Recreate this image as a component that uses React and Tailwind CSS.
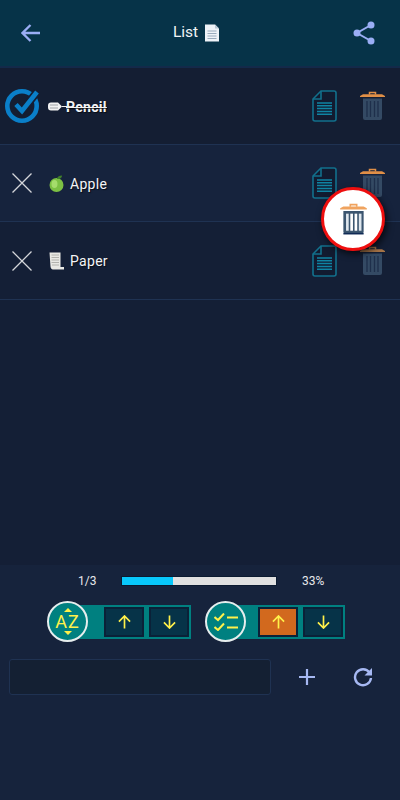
const FONT = { fontFamily: 'Roboto, "Liberation Sans", sans-serif' };

function DocIcon() {
  return (
    <svg width="25" height="32" viewBox="0 0 25 32" fill="none" className="block">
      <path d="M9 1H22a2 2 0 0 1 2 2V29a2 2 0 0 1-2 2H3a2 2 0 0 1-2-2V9Z" fill="#121b30" stroke="#12708c" strokeWidth="1.600" />
      <path d="M9 1V9H1" stroke="#12708c" strokeWidth="1.600" />
      <path d="M5 13H20M5 15.800H20M5 18.600H20M5 21.400H20M5 24.200H20" stroke="#0f84a3" strokeWidth="1.500" />
    </svg>
  );
}

function TrashIcon({ big, dim }) {
  const body = big ? "#3b556f" : "#344a64";
  const lid = big ? "#f0a35e" : dim ? "#a87548" : "#e08f47";
  return (
    <svg width={big ? 27 : 25} height={big ? 32 : 30} viewBox="0 0 25 30" className="block">
      <path d="M9.500 3.500V1.500H15.500V3.500" fill="none" stroke={lid} strokeWidth="1.500" />
      <path d="M0 5L3 3.200H22L25 5V6H0Z" fill={lid} />
      <path d="M3 7.500H22V27a2 2 0 0 1-2 2H5a2 2 0 0 1-2-2Z" fill={body} />
      {big ? (
        <>
          <path d="M5.500 10H8V26H5.500Z" fill="#dfe7ee" />
          <path d="M9.500 10H12V26H9.500Z" fill="#ffffff" />
          <path d="M13.500 10H16V26H13.500Z" fill="#ffffff" />
          <path d="M17.500 10H20V26H17.500Z" fill="#dfe7ee" />
          <path d="M3 28H22V29.500H3Z" fill="#102a55" />
        </>
      ) : (
        <path d="M7 10V26M10.500 10V26M14.500 10V26M18 10V26" stroke="#1e2f4b" strokeWidth="1.300" />
      )}
    </svg>
  );
}

function CrossIcon() {
  return (
    <svg width="20" height="20" viewBox="0 0 20 20" className="block">
      <path d="M0.500 0.500L19.500 19.500M19.500 0.500L0.500 19.500" stroke="#d4d6da" strokeWidth="1.300" />
    </svg>
  );
}

function CheckCircle() {
  return (
    <svg width="34" height="34" viewBox="0 0 34 34" className="block">
      <circle cx="17" cy="17" r="14.700" fill="none" stroke="#0a7fc9" strokeWidth="4.600" />
      <path d="M11 15.500L17 22L32 3" fill="none" stroke="#141e33" strokeWidth="8" />
      <path d="M11 15.500L17 22L32 3" fill="none" stroke="#0a7fc9" strokeWidth="4.600" />
    </svg>
  );
}

function PencilGlyph() {
  return (
    <svg width="14" height="9" viewBox="0 0 14 9" className="block overflow-visible">
      <path d="M3 0.500H10L14 4.500L10 8.500H3a3 3 0 0 1-3-3V3.500a3 3 0 0 1 3-3Z" fill="#f1f1f1" />
      <path d="M2 3H10M2 6H10" stroke="#8b8f96" strokeWidth="0.800" />
      <path d="M14 4.500H19" stroke="#f1f1f1" strokeWidth="1" />
    </svg>
  );
}

function AppleGlyph() {
  return (
    <svg width="15" height="17" viewBox="0 0 15 17" className="block">
      <ellipse cx="7.500" cy="10" rx="7" ry="7" fill="#7cc043" />
      <ellipse cx="5.500" cy="9" rx="3" ry="4" fill="#a5dc6c" />
      <path d="M8 4C8 2 10 0.500 13 0.500C13 3 11 4.500 8 4Z" fill="#3f7f2a" />
    </svg>
  );
}

function ScrollGlyph() {
  return (
    <svg width="15" height="18" viewBox="0 0 15 18" className="block">
      <path d="M0.500 0.500H11.500V15H15V17.500H4C2.500 17.500 1.500 16 1.500 14.500Z" fill="#e9e9e4" />
      <path d="M2.500 3H10M2.500 5.500H10M2.500 8H10M2.500 10.500H10M3 13H10" stroke="#a3a39e" strokeWidth="0.800" />
    </svg>
  );
}

function PageGlyph() {
  return (
    <svg width="16" height="18" viewBox="0 0 16 18" className="block">
      <path d="M1 0.500H11L15 4.500V17.500H1Z" fill="#eef3f8" />
      <path d="M11 0.500V4.500H15Z" fill="#b9c7d4" />
      <path d="M3.500 7H12.500M3.500 9.500H12.500M3.500 12H12.500M3.500 14.500H12.500" stroke="#8fa3b5" strokeWidth="0.900" />
    </svg>
  );
}

function Row({ h, bg, icon, glyph, label, strike, dimTrash }) {
  return (
    <div className={`flex items-center border-b border-[#1f3252] pl-[5px] pr-[15px] ${h} ${bg}`}>
      <div className="flex w-[34px] shrink-0 justify-center">{icon}</div>
      <div className={`ml-[9px] flex min-w-0 flex-1 items-center ${strike ? "gap-[4px]" : "gap-[6px]"}`}>
        <div className={`flex justify-center ${strike ? "w-[14px]" : "w-[16px]"}`}>{glyph}</div>
        <span
          className={`pt-[2px] text-[14px] tracking-[0.3px] text-[#f3f4f6] [text-shadow:1px_1px_1px_rgba(0,0,0,0.6)] ${
            strike ? "font-bold line-through" : "font-normal"
          }`}
        >
          {label}
        </span>
      </div>
      <div className="mr-[23px]">
        <DocIcon />
      </div>
      <TrashIcon dim={dimTrash} />
    </div>
  );
}

function Arrow({ down, active }) {
  return (
    <div
      className={`flex h-[30px] w-[40px] items-center justify-center border-2 border-[#0b2138] ${
        active ? "bg-[#d2691e]" : "bg-[#063348]"
      }`}
    >
      <svg width="13" height="14" viewBox="0 0 14 15" className="block">
        {down ? (
          <path d="M7 0.500V14M1 8L7 14L13 8" fill="none" stroke="#fff14a" strokeWidth="1.800" />
        ) : (
          <path d="M7 14.500V1M1 7L7 1L13 7" fill="none" stroke="#fff14a" strokeWidth="1.800" />
        )}
      </svg>
    </div>
  );
}

function SortGroup({ children, active, pad }) {
  return (
    <div className="flex items-center">
      <div className="z-10 flex h-[41px] w-[41px] shrink-0 items-center justify-center rounded-full border-2 border-[#e6eeee] bg-[#008080]">
        {children}
      </div>
      <div className={`ml-[-10px] flex h-[34px] items-center gap-[5px] bg-[#008080] pr-[2px] ${pad}`}>
        <Arrow active={active} />
        <Arrow down />
      </div>
    </div>
  );
}

export default function App() {
  return (
    <div className="relative flex h-[800px] w-[400px] flex-col overflow-hidden bg-[#141f36]" style={FONT}>
      <header className="flex h-[68px] shrink-0 items-center justify-between border-b-2 border-[#132a4a] bg-[#063348] pl-[21px] pr-[25px]">
        <svg width="19" height="18" viewBox="0 0 19 18" className="block">
          <path d="M19 9H2M9.500 1L1.500 9L9.500 17" fill="none" stroke="#9aaef5" strokeWidth="2.300" />
        </svg>
        <div className="flex items-center gap-[6px] text-[15.500px] font-normal text-[#f1f3f5]">
          <span>List</span>
          <PageGlyph />
        </div>
        <svg width="22" height="24" viewBox="0 0 22 24" className="block">
          <path d="M18 4L4 12L18 20" fill="none" stroke="#9aaef5" strokeWidth="2" />
          <circle cx="18" cy="4" r="3.500" fill="#9aaef5" />
          <circle cx="4" cy="12" r="3.500" fill="#9aaef5" />
          <circle cx="18" cy="20" r="3.500" fill="#9aaef5" />
        </svg>
      </header>

      <main className="flex-1">
        <Row h="h-[77px]" bg="bg-[#141e33]" icon={<CheckCircle />} glyph={<PencilGlyph />} label="Pencil" strike />
        <Row h="h-[77px]" bg="bg-[#16233d]" icon={<CrossIcon />} glyph={<AppleGlyph />} label="Apple" />
        <Row h="h-[78px]" bg="bg-[#141f36]" icon={<CrossIcon />} glyph={<ScrollGlyph />} label="Paper" dimTrash />
      </main>

      <footer className="flex h-[235px] shrink-0 flex-col bg-[#16233c]">
        <div className="mt-[10px] flex h-[12px] items-center">
          <span className="ml-[78px] w-[43px] text-[12px] text-[#e6e8eb]">1/3</span>
          <div className="flex h-[10px] w-[156px] overflow-hidden border border-[#0b1a30]">
            <div className="w-[33%] bg-[#08c8fb]" />
            <div className="flex-1 bg-[#e0e0e0]" />
          </div>
          <span className="ml-[25px] text-[12px] text-[#e6e8eb]">33%</span>
        </div>

        <div className="mt-[14px] flex items-center pl-[47px]">
          <SortGroup pad="pl-[26px]">
            <div className="flex flex-col items-center">
              <div className="h-0 w-0 border-x-[4px] border-b-[4px] border-x-transparent border-b-[#fff14a]" />
              <span className="my-[1px] text-[18px] leading-[17px] tracking-[1px] text-[#fff14a]">AZ</span>
              <div className="h-0 w-0 border-x-[4px] border-t-[4px] border-x-transparent border-t-[#fff14a]" />
            </div>
          </SortGroup>
          <div className="ml-[14px]">
            <SortGroup active pad="pl-[22px]">
              <svg width="24" height="18" viewBox="0 0 24 18" className="block">
                <path d="M0.500 4L4 7L10 0.500M0.500 14L4 17L10 10.500M13 4.500H24M13 14.500H24" fill="none" stroke="#fff14a" strokeWidth="2" />
              </svg>
            </SortGroup>
          </div>
        </div>

        <div className="mt-[17px] flex items-center pl-[9px]">
          <div className="h-[36px] w-[262px] rounded-[3px] border border-[#1f3252] bg-[#142033]" />
          <svg width="16" height="16" viewBox="0 0 16 16" className="ml-[28px] block">
            <path d="M8 0V16M0 8H16" stroke="#a6b8f2" strokeWidth="2.200" />
          </svg>
          <svg width="20" height="20" viewBox="0 0 20 20" className="ml-[38px] block">
            <path d="M16.500 5.500A8 8 0 1 0 18 11" fill="none" stroke="#a6b8f2" strokeWidth="2.400" />
            <path d="M19 1V8.500H11.500Z" fill="#a6b8f2" />
          </svg>
        </div>
      </footer>

      <div className="absolute left-[321px] top-[187px] flex h-[64px] w-[64px] items-center justify-center rounded-full border-[3px] border-[#ee0f0f] bg-white shadow-[2px_3px_7px_rgba(0,0,0,0.7)]">
        <TrashIcon big />
      </div>
    </div>
  );
}
